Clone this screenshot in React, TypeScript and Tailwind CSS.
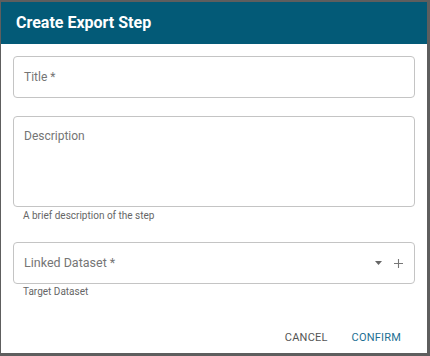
export default function App() {
  return (
    <div
      className="w-[430px] h-[356px] bg-[#5e5e5e] pt-[2px] pl-[1px] pr-[3px] pb-[3px]"
      style={{ fontFamily: "Roboto, 'Liberation Sans', sans-serif" }}
    >
      <div className="h-full bg-white flex flex-col">
        <div className="h-[42px] bg-[#035a77] flex items-center px-[15px]">
          <h1 className="text-white text-[16px] font-bold">Create Export Step</h1>
        </div>
        <div className="flex flex-col px-[12px] pt-[12px]">
          <div className="h-[42px] border border-[#c4c4c4] rounded-[4px] flex items-center px-[10px]">
            <span className="text-[12px] text-[#757575]">Title *</span>
          </div>
          <div className="mt-[18px] h-[91px] border border-[#c4c4c4] rounded-[4px] px-[10px] pt-[6px]">
            <span className="text-[12px] text-[#757575]">Description</span>
          </div>
          <p className="text-[10px] text-[#666] px-[10px] mt-[2px] leading-[14px]">
            A brief description of the step
          </p>
          <div className="mt-[19px] h-[42px] border border-[#c4c4c4] rounded-[4px] flex items-center pl-[10px] pr-[11px]">
            <span className="text-[12.5px] text-[#757575] flex-1">Linked Dataset *</span>
            <svg width="7" height="4" viewBox="0 0 7 4" className="mr-[12px]">
              <path d="M0 0h7L3.5 4z" fill="#666" />
            </svg>
            <svg width="9" height="9" viewBox="0 0 9 9">
              <path d="M4.5 0v9M0 4.5h9" stroke="#777" strokeWidth="1.1" />
            </svg>
          </div>
          <p className="text-[10px] text-[#666] px-[10px] mt-[1px] leading-[14px]">
            Target Dataset
          </p>
        </div>
        <div className="flex-1" />
        <div className="flex justify-end items-center gap-[24px] pr-[26px] pb-[7px]">
          <button className="text-[11px] text-[#555] tracking-[0.2px]">CANCEL</button>
          <button className="text-[11px] text-[#1d6f93] tracking-[0.2px]">CONFIRM</button>
        </div>
      </div>
    </div>
  );
}
